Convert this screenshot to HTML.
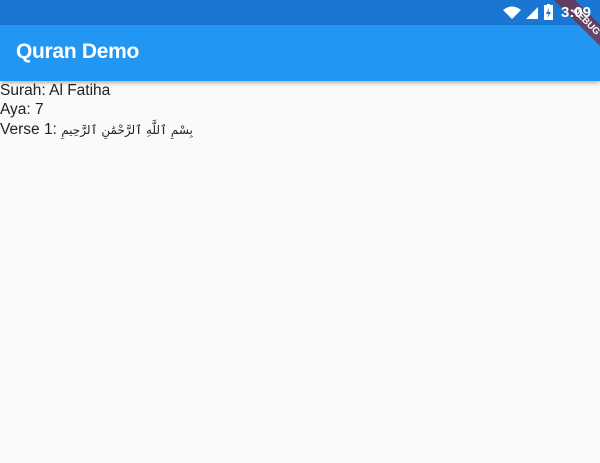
<!DOCTYPE html>
<html><head><meta charset="utf-8"><style>
body{margin:0;width:600px;height:463px;background:#fafafa;overflow:hidden;position:relative;font-family:"Liberation Sans","DejaVu Sans",sans-serif}
.sb{position:absolute;top:0;left:0;width:600px;height:25px;background:#1976d2}
.ab{position:absolute;top:25px;left:0;width:600px;height:56px;background:#2196f3;box-shadow:0 2px 4px rgba(0,0,0,.3)}
.ab span{position:absolute;left:16px;top:15px;color:#fff;font-size:21px;font-weight:bold;letter-spacing:-0.3px}
.t{position:absolute;left:0;color:#222;font-size:15.5px;line-height:19px}
.time{position:absolute;left:561px;top:4px;color:#fff;font-size:15px;font-weight:bold;z-index:2}
.rib{position:absolute;left:536px;top:14px;width:100px;height:15px;background:rgba(122,43,60,.75);transform:rotate(45deg);color:#fff;font-size:9.5px;font-weight:bold;text-align:center;line-height:15px;transform-origin:center;z-index:1}
</style></head><body>
<div class="sb"></div>
<svg style="position:absolute;left:503px;top:6px" width="40" height="14"><path d="M0 4 Q9 -3 18 4 L9 13Z" fill="#fff"/><path d="M23 13 L35 1 L35 13Z" fill="#fff"/></svg>
<svg style="position:absolute;left:544px;top:4px" width="9" height="16"><rect x="0" y="1" width="9" height="15" fill="#fff"/><rect x="3" y="0" width="3" height="2" fill="#fff"/><path d="M5 4 L2 10 H4.5 L3.5 14 L7 8 H4.5Z" fill="#1976d2"/></svg>
<div class="ab"><span>Quran Demo</span></div>
<div class="time">3:09</div>
<div class="rib">DEBUG</div>
<div class="t" style="top:81px">Surah: Al Fatiha</div>
<div class="t" style="top:100px">Aya: 7</div>
<div class="t" style="top:120px">Verse 1: <span style="font-family:'DejaVu Sans',sans-serif;font-size:12px">بِسْمِ ٱللَّهِ ٱلرَّحْمَٰنِ ٱلرَّحِيمِ</span></div>
</body></html>
